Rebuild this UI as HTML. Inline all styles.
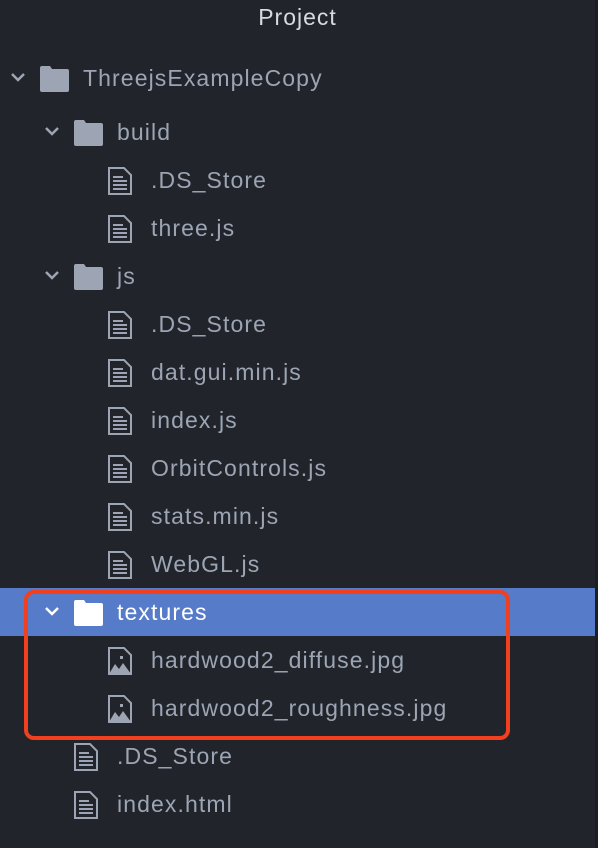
<!DOCTYPE html>
<html><head><style>
html,body{margin:0;padding:0;}
body{width:598px;height:848px;background:#21252b;position:relative;overflow:hidden;font-family:"Liberation Sans",sans-serif;}
.edge{position:absolute;right:0;top:0;width:3px;height:848px;background:#1b1e23;}
.t{position:absolute;left:0;top:4px;width:595px;text-align:center;color:#d7dae0;font-size:23px;letter-spacing:1px;}
.row{position:absolute;left:0;width:595px;height:48px;}
.row span{position:absolute;top:12px;font-size:23px;letter-spacing:1.1px;color:#9da5b4;line-height:24px;white-space:nowrap;}
.row svg{position:absolute;}
.sel{background:#567bc9;}
.sel span{color:#fff;}
.box{position:absolute;left:24px;top:590px;width:478px;height:142px;border:4px solid #f0401f;border-radius:10px;}
</style></head><body>
<div class="edge"></div>
<div class="t">Project</div>

<div class="row" style="top:54px">
<svg style="left:10px;top:17px" width="16" height="12"><path d="M2 3 L8 9 L14 3" stroke="#9da5b4" stroke-width="2.5" fill="none"/></svg>
<svg style="left:40px;top:12px" width="29" height="26"><path d="M0 2 Q0 0 2 0 H10 L12 3 H27 Q29 3 29 5 V24 Q29 26 27 26 H2 Q0 26 0 24Z" fill="#9da5b4"/></svg>
<span style="left:83px">ThreejsExampleCopy</span></div>

<div class="row" style="top:108px">
<svg style="left:44px;top:17px" width="16" height="12"><path d="M2 3 L8 9 L14 3" stroke="#9da5b4" stroke-width="2.5" fill="none"/></svg>
<svg style="left:74px;top:12px" width="29" height="26"><path d="M0 2 Q0 0 2 0 H10 L12 3 H27 Q29 3 29 5 V24 Q29 26 27 26 H2 Q0 26 0 24Z" fill="#9da5b4"/></svg>
<span style="left:117px">build</span></div>

<div class="row" style="top:156px"><svg style="left:108px;top:11px" width="24" height="28"><path d="M1 1 H16 L23 8 V27 H1Z" stroke="#9da5b4" stroke-width="2" fill="none"/><path d="M5 10h10M5 14h14M5 18h14M5 22h14" stroke="#9da5b4" stroke-width="2"/></svg><span style="left:151px">.DS_Store</span></div>
<div class="row" style="top:204px"><svg style="left:108px;top:11px" width="24" height="28"><path d="M1 1 H16 L23 8 V27 H1Z" stroke="#9da5b4" stroke-width="2" fill="none"/><path d="M5 10h10M5 14h14M5 18h14M5 22h14" stroke="#9da5b4" stroke-width="2"/></svg><span style="left:151px">three.js</span></div>

<div class="row" style="top:252px">
<svg style="left:44px;top:17px" width="16" height="12"><path d="M2 3 L8 9 L14 3" stroke="#9da5b4" stroke-width="2.5" fill="none"/></svg>
<svg style="left:74px;top:12px" width="29" height="26"><path d="M0 2 Q0 0 2 0 H10 L12 3 H27 Q29 3 29 5 V24 Q29 26 27 26 H2 Q0 26 0 24Z" fill="#9da5b4"/></svg>
<span style="left:117px">js</span></div>

<div class="row" style="top:300px"><svg style="left:108px;top:11px" width="24" height="28"><path d="M1 1 H16 L23 8 V27 H1Z" stroke="#9da5b4" stroke-width="2" fill="none"/><path d="M5 10h10M5 14h14M5 18h14M5 22h14" stroke="#9da5b4" stroke-width="2"/></svg><span style="left:151px">.DS_Store</span></div>
<div class="row" style="top:348px"><svg style="left:108px;top:11px" width="24" height="28"><path d="M1 1 H16 L23 8 V27 H1Z" stroke="#9da5b4" stroke-width="2" fill="none"/><path d="M5 10h10M5 14h14M5 18h14M5 22h14" stroke="#9da5b4" stroke-width="2"/></svg><span style="left:151px">dat.gui.min.js</span></div>
<div class="row" style="top:396px"><svg style="left:108px;top:11px" width="24" height="28"><path d="M1 1 H16 L23 8 V27 H1Z" stroke="#9da5b4" stroke-width="2" fill="none"/><path d="M5 10h10M5 14h14M5 18h14M5 22h14" stroke="#9da5b4" stroke-width="2"/></svg><span style="left:151px">index.js</span></div>
<div class="row" style="top:444px"><svg style="left:108px;top:11px" width="24" height="28"><path d="M1 1 H16 L23 8 V27 H1Z" stroke="#9da5b4" stroke-width="2" fill="none"/><path d="M5 10h10M5 14h14M5 18h14M5 22h14" stroke="#9da5b4" stroke-width="2"/></svg><span style="left:151px">OrbitControls.js</span></div>
<div class="row" style="top:492px"><svg style="left:108px;top:11px" width="24" height="28"><path d="M1 1 H16 L23 8 V27 H1Z" stroke="#9da5b4" stroke-width="2" fill="none"/><path d="M5 10h10M5 14h14M5 18h14M5 22h14" stroke="#9da5b4" stroke-width="2"/></svg><span style="left:151px">stats.min.js</span></div>
<div class="row" style="top:540px"><svg style="left:108px;top:11px" width="24" height="28"><path d="M1 1 H16 L23 8 V27 H1Z" stroke="#9da5b4" stroke-width="2" fill="none"/><path d="M5 10h10M5 14h14M5 18h14M5 22h14" stroke="#9da5b4" stroke-width="2"/></svg><span style="left:151px">WebGL.js</span></div>

<div class="row sel" style="top:588px">
<svg style="left:44px;top:17px" width="16" height="12"><path d="M2 3 L8 9 L14 3" stroke="#fff" stroke-width="2.5" fill="none"/></svg>
<svg style="left:74px;top:12px" width="29" height="26"><path d="M0 2 Q0 0 2 0 H10 L12 3 H27 Q29 3 29 5 V24 Q29 26 27 26 H2 Q0 26 0 24Z" fill="#fff"/></svg>
<span style="left:117px">textures</span></div>

<div class="row" style="top:636px"><svg style="left:108px;top:11px" width="24" height="28"><path d="M1 1 H16 L23 8 V27 H1Z" stroke="#9da5b4" stroke-width="2" fill="none"/><path d="M1 27 L7 17 L11 22 L15 16 L23 27Z" fill="#9da5b4"/><rect x="12" y="9" width="3" height="3" fill="#9da5b4"/></svg><span style="left:151px">hardwood2_diffuse.jpg</span></div>
<div class="row" style="top:684px"><svg style="left:108px;top:11px" width="24" height="28"><path d="M1 1 H16 L23 8 V27 H1Z" stroke="#9da5b4" stroke-width="2" fill="none"/><path d="M1 27 L7 17 L11 22 L15 16 L23 27Z" fill="#9da5b4"/><rect x="12" y="9" width="3" height="3" fill="#9da5b4"/></svg><span style="left:151px">hardwood2_roughness.jpg</span></div>

<div class="row" style="top:732px"><svg style="left:74px;top:11px" width="24" height="28"><path d="M1 1 H16 L23 8 V27 H1Z" stroke="#9da5b4" stroke-width="2" fill="none"/><path d="M5 10h10M5 14h14M5 18h14M5 22h14" stroke="#9da5b4" stroke-width="2"/></svg><span style="left:117px">.DS_Store</span></div>
<div class="row" style="top:780px"><svg style="left:74px;top:11px" width="24" height="28"><path d="M1 1 H16 L23 8 V27 H1Z" stroke="#9da5b4" stroke-width="2" fill="none"/><path d="M5 10h10M5 14h14M5 18h14M5 22h14" stroke="#9da5b4" stroke-width="2"/></svg><span style="left:117px">index.html</span></div>

<div class="box"></div>
</body></html>
